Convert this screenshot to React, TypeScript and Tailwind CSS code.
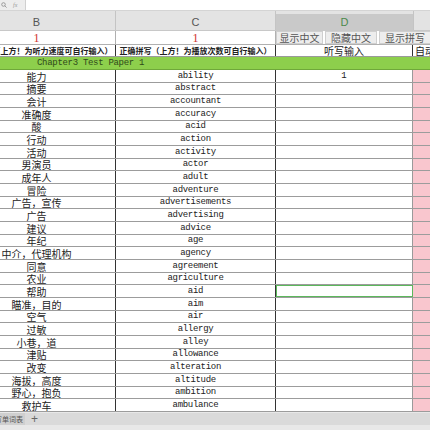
import React from "react";

const words: [string, string][] = [
  ["能力", "ability"],
  ["摘要", "abstract"],
  ["会计", "accountant"],
  ["准确度", "accuracy"],
  ["酸", "acid"],
  ["行动", "action"],
  ["活动", "activity"],
  ["男演员", "actor"],
  ["成年人", "adult"],
  ["冒险", "adventure"],
  ["广告，宣传", "advertisements"],
  ["广告", "advertising"],
  ["建议", "advice"],
  ["年纪", "age"],
  ["中介，代理机构", "agency"],
  ["同意", "agreement"],
  ["农业", "agriculture"],
  ["帮助", "aid"],
  ["瞄准，目的", "aim"],
  ["空气", "air"],
  ["过敏", "allergy"],
  ["小巷，道", "alley"],
  ["津贴", "allowance"],
  ["改变", "alteration"],
  ["海拔，高度", "altitude"],
  ["野心，抱负", "ambition"],
  ["救护车", "ambulance"],
];

const cjk = "font-['Noto_Sans_CJK_SC',sans-serif]";
const mono = "font-['Liberation_Mono',monospace]";

const rowH = (i: number) =>
  Math.round((342 * (i + 1)) / 27) - Math.round((342 * i) / 27) === 13 ? "h-[13px]" : "h-[12px]";

export default function App() {
  return (
    <div className="w-[430px] h-[430px] overflow-hidden bg-white flex flex-col text-[#222]">
      {/* formula bar */}
      <div className="h-[11px] flex border-b border-[#d4d4d4] shrink-0">
        <div className="w-[26px] shrink-0 bg-[#ededed] border-r border-[#d0d0d0] flex items-center gap-[6px] pl-[1px]">
          <svg width="6" height="6" viewBox="0 0 6 6">
            <circle cx="2.5" cy="2.5" r="1.8" fill="none" stroke="#8a8a8a" strokeWidth="0.8" />
            <line x1="3.8" y1="3.8" x2="5.6" y2="5.6" stroke="#8a8a8a" strokeWidth="0.8" />
          </svg>
          <span className="text-[6px] italic text-[#999] font-['Liberation_Serif',serif] leading-none">fx</span>
        </div>
        <div className="flex-1 bg-white" />
      </div>

      {/* column headers */}
      <div className="h-[20px] shrink-0 flex ml-[-42px] bg-[#e3e3e3] border-b border-[#c8c8c8]">
        <div className="w-[158px] shrink-0 flex items-center justify-center border-r border-[#c4c4c4] text-[11px] text-[#555] font-['Liberation_Sans',sans-serif] pt-[3px]">B</div>
        <div className="w-[160px] shrink-0 flex items-center justify-center border-r border-[#c4c4c4] text-[11px] text-[#555] font-['Liberation_Sans',sans-serif] pt-[3px]">C</div>
        <div className="w-[137px] shrink-0 flex flex-col">
          <div className="h-[4px] bg-[#e3e3e3]" />
          <div className="flex-1 bg-[#c9c9c9] flex items-center justify-center text-[11px] text-[#4c8a4c] font-['Liberation_Sans',sans-serif]">D</div>
        </div>
        <div className="flex-1 min-w-0 border-l border-[#c4c4c4]" />
      </div>

      {/* row 1: numbers + buttons */}
      <div className="h-[13px] shrink-0 flex ml-[-42px]">
        <div className="w-[158px] shrink-0 flex items-center justify-center border-r border-[#b0b0b0] text-[12px] leading-none text-[#d0312d] font-['Liberation_Serif',serif]">1</div>
        <div className="w-[160px] shrink-0 flex items-center justify-center border-r border-[#b0b0b0] text-[12px] leading-none text-[#d0312d] font-['Liberation_Serif',serif]">1</div>
        <div className={`flex-1 min-w-0 flex items-stretch gap-[2px] ${cjk} text-[10px] leading-[10px] text-[#555] whitespace-nowrap overflow-hidden`}>
          <div className="w-[47px] shrink-0 bg-[#ededed] border border-[#cfcfcf] flex items-center justify-center">显示中文</div>
          <div className="w-[52px] shrink-0 bg-[#ededed] border border-[#cfcfcf] flex items-center justify-center">隐藏中文</div>
          <div className="w-[60px] shrink-0 bg-[#ededed] border border-[#cfcfcf] flex items-center pl-[5px]">显示拼写</div>
        </div>
      </div>

      {/* row 2: column titles */}
      <div className={`h-[13px] shrink-0 flex ml-[-42px] border-b border-[#9a9a9a] border-t border-t-[#b0b0b0] ${cjk} text-[8px] font-semibold leading-none whitespace-nowrap`}>
        <div className="w-[158px] shrink-0 flex items-center justify-center overflow-hidden border-r border-[#333]">中文提示（上方！为听力速度可自行输入）</div>
        <div className="w-[160px] shrink-0 flex items-center justify-center overflow-hidden border-r border-[#333]">正确拼写（上方！为播放次数可自行输入）</div>
        <div className="w-[137px] shrink-0 flex items-center justify-center overflow-hidden border-r border-[#333] text-[10px] font-normal">听写输入</div>
        <div className="flex-1 min-w-0 overflow-hidden flex items-center pl-[2px] text-[10px] font-normal">自动判断</div>
      </div>

      {/* green chapter row */}
      <div className="h-[13px] shrink-0 flex bg-[#8dcf4c] border-b border-[#6fa83a]">
        <div className={`pl-[37px] flex items-center ${mono} text-[9px] tracking-[-0.3px] text-[#2f4a1a] whitespace-pre leading-none`}>
          Chapter3 Test Paper 1
        </div>
      </div>

      {/* data rows */}
      <div className="flex flex-col shrink-0">
        {words.map(([zh, en], i) => (
          <div key={en} className={`${rowH(i)} flex ml-[-42px] border-b border-[#9c9c9c]`}>
            <div className={`w-[158px] shrink-0 flex items-center justify-center border-r border-[#333] ${cjk} text-[10px] leading-[11px] whitespace-nowrap`}>{zh}</div>
            <div className={`w-[160px] shrink-0 flex items-center justify-center border-r border-[#333] ${mono} text-[9px] tracking-[-0.3px] leading-none`}>{en}</div>
            <div className={`w-[137px] shrink-0 flex items-center justify-center border-r border-[#9a9a9a] ${mono} text-[9px] leading-none ${i === 17 ? "outline outline-1 outline-[#5cb85c] -outline-offset-1" : ""}`}>
              {i === 0 ? "1" : ""}
            </div>
            <div className="flex-1 min-w-0 bg-[#f9c6ce]" />
          </div>
        ))}
      </div>

      {/* sheet tab bar */}
      <div className="flex-1 flex flex-col bg-[#e8e8e8]">
        <div className="h-[12px] flex items-center bg-[#dadada] mt-[1px]">
          <div className={`w-[25px] shrink-0 h-full bg-[#cfcfcf] flex items-center justify-end overflow-hidden pr-[2px] ${cjk} text-[7px] text-[#555] whitespace-nowrap leading-none`}>听写单词表</div>
          <div className="ml-[6px] text-[12px] text-[#666] leading-none font-['Liberation_Sans',sans-serif]">+</div>
        </div>
      </div>
    </div>
  );
}
